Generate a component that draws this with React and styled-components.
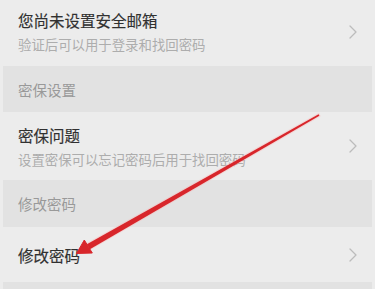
import React from "react";
import styled, { createGlobalStyle } from "styled-components";

const Global = createGlobalStyle`
  html, body { margin: 0; padding: 0; background: #ececec; }
  body { font-family: "Noto Sans CJK SC", "Noto Sans", sans-serif; overflow: hidden; }
`;

const Page = styled.div`
  position: relative;
  width: 375px;
  height: 289px;
  overflow: hidden;
  background: #ececec;
`;

const List = styled.div`
  display: flex;
  flex-direction: column;
  margin-top: -3px;
`;

const Row = styled.div`
  display: flex;
  align-items: center;
  justify-content: space-between;
  height: ${(p) => p.$h}px;
  padding: 0 17px 0 18px;
  box-sizing: border-box;
`;

const Texts = styled.div`
  display: flex;
  flex-direction: column;
  gap: ${(p) => p.$gap || 0}px;
`;

const Title = styled.div`
  font-size: 15.5px;
  line-height: 20px;
  font-weight: 400;
  color: #303030;
  -webkit-text-stroke: 0.15px #303030;
`;

const Sub = styled.div`
  font-size: 13.4px;
  line-height: 18px;
  color: #adadad;
`;

const Section = styled.div`
  display: flex;
  align-items: center;
  height: ${(p) => p.$h}px;
  margin: 0 3px;
  padding-left: 15px;
  background: #e2e2e2;
  font-size: 14.5px;
  color: #999999;
`;

const Chevron = () => (
  <svg width="10" height="16" viewBox="0 0 10 16">
    <polyline points="2,2 8,8 2,14" fill="none" stroke="#bcbcbc" strokeWidth="1.3" strokeLinecap="round" strokeLinejoin="round" />
  </svg>
);

const Overlay = styled.svg`
  position: absolute;
  left: 0;
  top: 0;
  pointer-events: none;
`;

const Arrow = () => (
  <Overlay width="375" height="289" viewBox="0 0 375 289">
    <g>
      <polygon points="319.4,115.8 318.6,114.2 86.9,244.2 89.9,249.2" fill="#ff9a9a" opacity="0.35" stroke="#ffb0b0" strokeWidth="2" />
      <polygon points="319.4,115.8 318.6,114.2 86.9,244.2 89.9,249.2" fill="#d8262b" />
      <polygon points="76.5,253.5 84.3,240 92.3,253" fill="#d8262b" stroke="#d8262b" strokeWidth="1" strokeLinejoin="round" />
    </g>
  </Overlay>
);

export default function App() {
  return (
    <Page>
      <Global />
      <List>
        <Row $h={69}>
          <Texts $gap={5}>
            <Title>您尚未设置安全邮箱</Title>
            <Sub>验证后可以用于登录和找回密码</Sub>
          </Texts>
          <Chevron />
        </Row>
        <Section $h={46}>密保设置</Section>
        <Row $h={68}>
          <Texts $gap={5}>
            <Title>密保问题</Title>
            <Sub>设置密保可以忘记密码后用于找回密码</Sub>
          </Texts>
          <Chevron />
        </Row>
        <Section $h={47}>修改密码</Section>
        <Row $h={55}>
          <Title>修改密码</Title>
          <Chevron />
        </Row>
        <Section $h={46} />
      </List>
      <Arrow />
    </Page>
  );
}
